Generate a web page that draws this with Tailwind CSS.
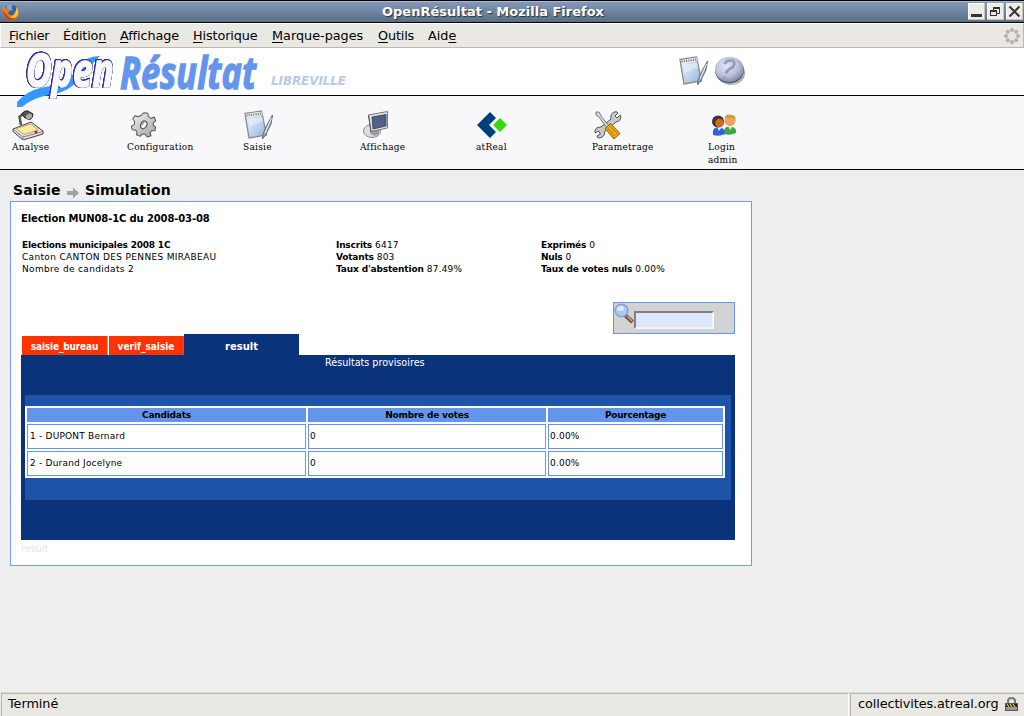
<!DOCTYPE html>
<html lang="fr">
<head>
<meta charset="utf-8">
<title>OpenRésultat - Mozilla Firefox</title>
<script src="https://cdn.jsdelivr.net/npm/@tailwindcss/browser@4"></script>
</head>
<body class="w-[1024px] h-[716px] overflow-hidden bg-[#eeeeee] text-black font-['DejaVu_Sans',sans-serif] flex flex-col">
<svg width="0" height="0" class="absolute">
  <defs>
    <linearGradient id="pad" x1="0" y1="0" x2="1" y2="1"><stop offset="0" stop-color="#eef5fc"/><stop offset=".5" stop-color="#c3d7ee"/><stop offset="1" stop-color="#8fb3dc"/></linearGradient>
    <radialGradient id="ball" cx=".4" cy=".35" r=".7"><stop offset="0" stop-color="#e2e6f6"/><stop offset=".6" stop-color="#b9c0da"/><stop offset="1" stop-color="#7c839e"/></radialGradient>
    <linearGradient id="metal" x1="0" y1="0" x2="1" y2="1"><stop offset="0" stop-color="#f2f2f2"/><stop offset="1" stop-color="#a2a2a2"/></linearGradient>
    <symbol id="notepad" viewBox="0 0 32 30">
      <path d="M1 3.500 L17.500 1 L22.500 25 L5 28 Z" fill="url(#pad)" stroke="#858a8f" stroke-width="1.300"/>
      <path d="M1.500 4 L17.500 1.500 L18.500 5 L2.500 7 Z" fill="#e4e6e2"/>
      <path d="M2.500 5.500 L18 3.500" stroke="#777" stroke-width="2" stroke-dasharray="1 1.300"/>
      <path d="M4.500 9 L18.500 7 L19.500 12 Q12 13 5.500 18 Z" fill="#fff" opacity=".35"/>
      <path d="M28.500 5 L27 14 L21.500 25 L18.500 29 L19 24 L24 13 Z" fill="#a5a9b2" stroke="#666b75" stroke-width="1"/>
      <path d="M27.500 8 L21 23" stroke="#f1f3f5" stroke-width="1"/>
    </symbol>
  </defs>
</svg>

<!-- Title bar -->
<div class="h-[23px] shrink-0 border-y border-black bg-linear-to-b from-[#849bbb] to-[#5a6e86] shadow-[inset_0_1px_0_#a9bbd2] flex items-center pl-[2px] pr-[1px]">
  <svg class="w-[18px] h-[18px] shrink-0" viewBox="0 0 18 18">
    <circle cx="9" cy="9" r="7.500" fill="#2f63a6"/>
    <path d="M4 4 Q7 0 11 2 Q8 5 11 7 Q7 9 4 4Z" fill="#74aada"/>
    <path d="M1 3 Q4 6 6 6 Q9 7 6 10 Q8 14 12 11 Q15 8 14 3 Q18 8 16 13 Q12 19 6 16.500 Q-1 13 1 3Z" fill="#ec7d1c"/>
    <path d="M14.500 4 Q18 9 15 13 Q11 17 7 14 Q14 14 14.500 4Z" fill="#f8c630"/>
    <path d="M1 8 Q2 15 8 17 Q12 17 14 15 Q8 16 5 12Z" fill="#c73d13"/>
  </svg>
  <div class="mx-auto text-[13px] leading-[20px] font-bold text-white whitespace-nowrap [text-shadow:1px_1px_1px_#26303c]">OpenRésultat - Mozilla Firefox</div>
  <div class="flex gap-[2px] w-[57px] shrink-0 justify-end">
    <svg class="w-[17px] h-[17px]" viewBox="0 0 17 17"><rect width="17" height="17" fill="#c9c6be"/><rect width="16" height="16" fill="#fff"/><rect x="1" y="1" width="15" height="15" fill="#eeece8"/><rect x="3" y="11" width="11" height="3" fill="#333"/></svg>
    <svg class="w-[17px] h-[17px]" viewBox="0 0 17 17"><rect width="17" height="17" fill="#c9c6be"/><rect width="16" height="16" fill="#fff"/><rect x="1" y="1" width="15" height="15" fill="#eeece8"/><path d="M6.500 7V4.500H12.500V10.500H10" fill="none" stroke="#333"/><rect x="6" y="4" width="7" height="2" fill="#333"/><rect x="3.500" y="7.500" width="6" height="5" fill="#eeece8" stroke="#333"/><rect x="3" y="7" width="7" height="2" fill="#333"/></svg>
    <svg class="w-[17px] h-[17px]" viewBox="0 0 17 17"><rect width="17" height="17" fill="#c9c6be"/><rect width="16" height="16" fill="#fff"/><rect x="1" y="1" width="15" height="15" fill="#eeece8"/><path d="M3.500 3.500L13.500 13.500M13.500 3.500L3.500 13.500" stroke="#333" stroke-width="2"/></svg>
  </div>
</div>

<!-- Menu bar -->
<div class="h-[25px] shrink-0 bg-[#e9e8e2] border-t border-l border-r border-b border-t-white border-l-white border-r-[#bbb7ae] border-b-[#bbb7ae] flex items-center text-[12.800px] leading-[20px] whitespace-nowrap pl-[8px] pr-[3px] underline-offset-[2px]">
  <span class="w-[54px] tracking-[-0.200px]"><u>F</u>ichier</span>
  <span class="w-[57px] tracking-[-0.150px]">Éditio<u>n</u></span>
  <span class="w-[73px] tracking-[-0.100px]"><u>A</u>ffichage</span>
  <span class="w-[79px] tracking-[-0.100px]"><u>H</u>istorique</span>
  <span class="w-[106px]"><u>M</u>arque-pages</span>
  <span class="w-[50px] tracking-[-0.150px]"><u>O</u>utils</span>
  <span>Aid<u>e</u></span>
  <svg class="ml-auto w-[16px] h-[16px]" viewBox="0 0 16 16" fill="#b1b0ad"><circle cx="8" cy="2" r="2"/><circle cx="12.200" cy="3.800" r="2"/><circle cx="14" cy="8" r="2"/><circle cx="12.200" cy="12.200" r="2"/><circle cx="8" cy="14" r="2"/><circle cx="3.800" cy="12.200" r="2"/><circle cx="2" cy="8" r="2"/><circle cx="3.800" cy="3.800" r="2"/></svg>
</div>

<!-- Banner -->
<div class="relative h-[48px] shrink-0 bg-white border-b border-black flex items-start">
  <svg class="absolute left-0 top-0 w-[265px] h-[62px] z-10 overflow-visible" viewBox="0 48 265 62">
    <path d="M17 107 V102 Q27 91 40 88 Q52 85 62 86 Q72 76 82 63 Q88 56 100 56 Q90 66 81 77 Q70 92 50 95 Q34 97 22 107 Z" fill="#3399ff"/>
    <g font-family="Open Sans, Noto Sans, sans-serif" font-weight="700" font-style="italic">
      <text class="[filter:drop-shadow(0.600px_0_0_#34349a)_drop-shadow(-0.600px_0_0_#34349a)_drop-shadow(0_0.500px_0_#34349a)_drop-shadow(0_-0.500px_0_#34349a)]" x="26" y="87" font-size="47" textLength="88" lengthAdjust="spacingAndGlyphs" fill="#f8f8fb" stroke="#f8f8fb" stroke-width="1.600">Open</text>
      <text x="120" y="88.500" font-size="44" textLength="136" lengthAdjust="spacingAndGlyphs" fill="#6495ed" stroke="#6495ed" stroke-width="1.300">Résultat</text>
    </g>
  </svg>
  <div class="ml-[271px] mt-[25px] w-[408px] text-[12px] leading-[16px] font-bold italic tracking-[-0.100px] text-[#b9c9e6]">LIBREVILLE</div>
  <svg class="mt-[8px] w-[32px] h-[30px]"><use href="#notepad"/></svg>
  <svg class="mt-[8px] ml-[3px] w-[32px] h-[30px]" viewBox="0 0 32 30">
    <ellipse cx="17" cy="17" rx="14" ry="12" fill="#a1a4ac"/><ellipse cx="16" cy="15.800" rx="14" ry="12.500" fill="#d9dce6"/>
    <ellipse cx="15.500" cy="14.500" rx="14.500" ry="13" fill="#565c72"/><ellipse cx="15.300" cy="13.300" rx="14.300" ry="12.600" fill="url(#ball)"/>
    <path d="M10.500 8 Q13 3.500 18 4.500 Q22 6 19 11 Q13 14 12 17.500 M10.500 20.500 L10 23" fill="none" stroke="#969cb6" stroke-width="2.800"/>
  </svg>
</div>

<!-- Main toolbar -->
<div class="h-[74px] shrink-0 bg-[#f8f8fb] border-b border-black pt-[14px] pl-[12px] grid grid-cols-[repeat(7,116px)] text-[10px] leading-[13px] tracking-[0.250px] font-['DejaVu_Serif_Condensed','DejaVu_Serif',serif]">
  <div>
    <svg class="w-[32px] h-[30px]" viewBox="0 0 32 30">
      <path d="M1 19 L19 12 L31 21 V24 L11 30 L1 21.500Z" fill="#dedede" stroke="#444"/><path d="M1 19L11 27L31 21.500M11 27V30" fill="none" stroke="#666" stroke-width=".7"/>
      <path d="M4 18.500 L19 14 L26 20 L12 24.500Z" fill="#ffeaa0" stroke="#b79a4c" stroke-width=".8"/><circle cx="24" cy="22" r="1.600" fill="#d01e1e"/>
      <path d="M9 15 L7.500 7 L12 3" fill="none" stroke="#555548" stroke-width="2.500"/><path d="M10 4 Q12 0 16 1 L21 4 Q21 8 18 9.500 Q12 9 10 4Z" fill="#555" stroke="#222"/><ellipse cx="17" cy="6.500" rx="3.300" ry="2.500" fill="#aaa" transform="rotate(-30 17 6.500)"/>
    </svg>
    <div>Analyse</div>
  </div>
  <div>
    <svg class="w-[32px] h-[30px]" viewBox="0 0 32 30">
      <g transform="translate(15.800 14.800) rotate(10)"><path d="M-2 -12H2L3 -9L6 -7.500L9 -9.500L11 -6L9 -3.500L9.500 -1L12 0V4L9 4.500L7.500 6.500L9 9.500L5.500 11.500L3 9L0 9.500L-1.500 12L-5.500 11L-5.500 8L-7.500 6.500L-10.500 7L-12 3.500L-9.500 1.500L-9.500 -1.500L-12 -4L-10 -7.500L-7 -7L-4 -9Z" fill="url(#metal)" stroke="#555" stroke-linejoin="round"/><ellipse rx="3" ry="4" fill="#f8f8fb" stroke="#444" transform="rotate(15)"/><path d="M-2.500 1L0 -3.500" stroke="#888" stroke-width="1.500"/></g>
    </svg>
    <div class="-ml-[1px]">Configuration</div>
  </div>
  <div>
    <svg class="w-[32px] h-[30px]"><use href="#notepad"/></svg>
    <div class="-ml-[1px]">Saisie</div>
  </div>
  <div>
    <svg class="w-[32px] h-[30px]" viewBox="0 0 32 30">
      <ellipse cx="12" cy="21" rx="8.500" ry="6.500" fill="#ddd" stroke="#888"/><path d="M10 18H19V24Q14 28 10 23Z" fill="#9b9b9b"/>
      <path d="M8.500 5 L27.500 1.500 V18 L11 21.500Z" fill="#e6e6e4" stroke="#777"/><path d="M8.500 5L11 21.500" stroke="#555"/><path d="M12 7 L26 4.500 V16 L13 19Z" fill="#4f6187" stroke="#2c3a5c" stroke-width=".8"/>
    </svg>
    <div>Affichage</div>
  </div>
  <div>
    <svg class="w-[32px] h-[30px]" viewBox="0 0 32 30"><path d="M14 2L20 8L13 15L20 22L14 28L1 15Z" fill="#003f7d"/><path d="M24 8L31 15L24 22L17 15Z" fill="#38da0b"/></svg>
    <div>atReal</div>
  </div>
  <div>
    <svg class="w-[32px] h-[30px]" viewBox="0 0 32 30">
      <path d="M22 2 Q25 1 26 3 L23 6 L25 8 L28.500 5 Q30 11 24 12 L13 21 Q13 28 6 28 L5 26 L8.500 24 L6.500 21 L3 23 Q2 17 9 17 L19 9 Q18 4 22 2Z" fill="#c9c9c9" stroke="#555"/>
      <path d="M4 2 L7 2 L9 6 L17 16 L15 18 L7 7 L4 5Z" fill="#ddd" stroke="#555" stroke-width=".8"/>
      <path d="M13 18.500 L18.500 13.500 L28 23.500 L22 29 Z" fill="#f0a80e" stroke="#87600a"/><path d="M15.500 18L22.500 26M18 16L25.500 24" stroke="#b57b04"/>
    </svg>
    <div>Parametrage</div>
  </div>
  <div>
    <svg class="w-[32px] h-[30px]" viewBox="0 0 32 30">
      <path d="M16 24 Q15 18 19 17 H25 Q29 19 28 23 Q22 26 16 24Z" fill="#3ea846"/><path d="M20 16L22 20L25 16Z" fill="#dff0df"/><circle cx="22" cy="10.500" r="5.500" fill="#f0a45a"/><path d="M16.500 8 Q18 3 23 5 Q28 5 27.500 10 Q24 6 16.500 8Z" fill="#cf983d"/>
      <path d="M5 25 Q4 19 8 17.500 H13 Q17 19 17 24 Q11 27 5 25Z" fill="#2f62dc"/><path d="M9 17L11 21L14 17Z" fill="#dfe8ff"/><circle cx="10" cy="11.500" r="6" fill="#3b3535"/><circle cx="11.500" cy="13" r="4.300" fill="#d06a1f"/>
    </svg>
    <div>Login<br>admin</div>
  </div>
</div>

<!-- Page -->
<main class="grow flex flex-col items-start">
  <h1 class="h-[31px] pt-[10px] pl-[13px] flex text-[14px] leading-[20px] font-bold tracking-[0.100px]">
    <span class="w-[54px]">Saisie</span>
    <svg class="w-[12px] h-[12px] mt-[7px] mr-[6px]" viewBox="0 0 12 12"><path d="M0 4H6V0.500L12 6L6 11.500V8H0Z" fill="#a3a3a3"/></svg>
    <span>Simulation</span>
  </h1>
  <section class="ml-[10px] w-[742px] h-[365px] border border-[#6d9bee] bg-white pl-[10px] flex flex-col items-start">
    <h2 class="mt-[10px] text-[10px] leading-[14px] font-bold tracking-[-0.130px]">Election MUN08-1C du 2008-03-08</h2>
    <div class="mt-[13px] ml-[1px] grid grid-cols-[314px_205px_190px] text-[9px] leading-[12px] tracking-[0.330px] whitespace-nowrap">
      <div><b class="tracking-[-0.200px]">Elections municipales 2008 1C</b><br>Canton CANTON DES PENNES MIRABEAU<br>Nombre de candidats 2</div>
      <div class="tracking-[0.200px]"><b class="tracking-[-0.200px]">Inscrits</b> 6417<br><b class="tracking-[-0.200px]">Votants</b> 803<br><b class="tracking-[-0.150px]">Taux d'abstention</b> 87.49%</div>
      <div class="tracking-[0.200px]"><b class="tracking-[-0.200px]">Exprimés</b> 0<br><b class="tracking-[-0.250px]">Nuls</b> 0<br><b class="tracking-[-0.170px]">Taux de votes nuls</b> 0.00%</div>
    </div>
    <div class="mt-[27px] ml-[592px] w-[122px] h-[32px] bg-[#d3d3d3] border border-[#6495ed] flex">
      <svg class="w-[20px] h-[22px]" viewBox="0 0 20 22"><path d="M11 12L18.500 19" stroke="#704e38" stroke-width="4"/><path d="M13 13L18 18" stroke="#d0a578" stroke-width="1.500"/><circle cx="7.500" cy="7.500" r="6.300" fill="#a9c9fa" stroke="#8b9cc8" stroke-width="1.400"/><ellipse cx="6.500" cy="5.500" rx="3.500" ry="2.500" fill="#dcebff"/></svg>
      <input aria-label="Recherche" class="mt-[8px] w-[80px] h-[18px] border-2 border-t-[#808080] border-l-[#808080] border-r-[#f6f6f6] border-b-[#f6f6f6] bg-[#dde8fb]">
    </div>
    <div class="flex items-end h-[21px] ml-[1px] text-white font-bold text-center text-[10px] leading-[21px]">
      <div class="w-[86px] h-[19px] bg-[#ff3300] border-r border-[#a9aaa5] font-['DejaVu_Sans_Condensed','DejaVu_Sans',sans-serif] tracking-[-0.150px]">saisie_bureau</div>
      <div class="ml-[1px] w-[75px] h-[19px] bg-[#ff3300] border-r border-[#776f8b] font-['DejaVu_Sans_Condensed','DejaVu_Sans',sans-serif]">verif_saisie</div>
      <div class="w-[115px] h-[21px] bg-[#0b337c] leading-[25px]">result</div>
    </div>
    <div class="w-[714px] h-[185px] bg-[#0b337c] pl-[4px]">
      <div class="h-[40px] pl-[300px] pt-[1px] text-white text-[9.600px] leading-[14px]">Résultats provisoires</div>
      <div class="w-[706px] h-[105px] bg-[#1d54a9] pt-[11px]">
        <div class="w-[700px] h-[72px] bg-white p-[2px] grid grid-cols-[279px_238px_175px] grid-rows-[14px_25px_25px] gap-[2px] text-[9px] tracking-[0.200px] *:border *:border-[#6495ed]">
          <b class="bg-[#6495ed] text-center leading-[12px] tracking-[-0.200px]">Candidats</b>
          <b class="bg-[#6495ed] text-center leading-[12px] tracking-[-0.200px]">Nombre de votes</b>
          <b class="bg-[#6495ed] text-center leading-[12px] tracking-[-0.300px]">Pourcentage</b>
          <div class="pl-[2px] leading-[22px]">1 - DUPONT Bernard</div>
          <div class="pl-[1px] leading-[22px]">0</div>
          <div class="pl-[1px] leading-[22px]">0.00%</div>
          <div class="pl-[2px] leading-[22px]">2 - Durand Jocelyne</div>
          <div class="pl-[1px] leading-[22px]">0</div>
          <div class="pl-[1px] leading-[22px]">0.00%</div>
        </div>
      </div>
    </div>
    <div class="mt-[2px] text-[9.700px] leading-[14px] text-[#dde6f8]">result</div>
  </section>
</main>

<!-- Status bar -->
<footer class="h-[24px] shrink-0 bg-[#e9e8e2] border-t border-[#dcdad3] flex gap-[1px] pl-[1px] text-[12.800px] leading-[20px] whitespace-nowrap">
  <div class="w-[848px] h-[23px] border-t border-l border-r border-t-[#bbb7ae] border-l-[#bbb7ae] border-r-white pl-[6px] tracking-[-0.050px]">Terminé</div>
  <div class="grow h-[23px] border-t border-l border-[#bbb7ae] pl-[7px] flex">
    <span class="w-[147px] tracking-[-0.080px]">collectivites.atreal.org</span>
    <svg class="w-[13px] h-[14px] mt-[3px]" viewBox="0 0 13 14"><path d="M3 7V4Q3 1 6.500 1Q10 1 10 4V7" fill="none" stroke="#777" stroke-width="2"/><rect x=".5" y="6.500" width="12" height="7" fill="#999" stroke="#555"/><rect x="1" y="7" width="11" height="3" fill="#222"/><path d="M2 7L4 10M5 7L7 10M8 7L10 10" stroke="#f1c62e" stroke-width="1.300"/></svg>
  </div>
</footer>
</body>
</html>
